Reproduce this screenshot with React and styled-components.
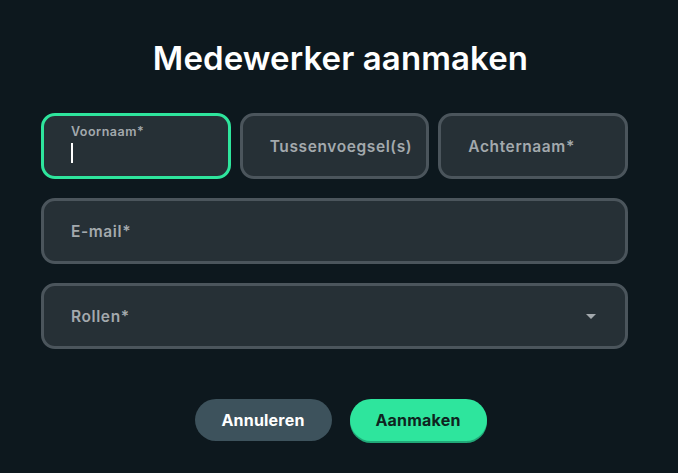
import React from "react";
import styled, { createGlobalStyle } from "styled-components";

const colors = {
  page: "#0d181e",
  field: "#263036",
  border: "#4b555c",
  focus: "#2ee59d",
  placeholder: "#a3a9ad",
  secondary: "#3d525c",
  white: "#ffffff",
};

const GlobalStyle = createGlobalStyle`
  html, body {
    margin: 0;
    padding: 0;
    background: ${colors.page};
    font-family: Inter, "Noto Sans", sans-serif;
  }
`;

const Page = styled.div`
  width: 678px;
  height: 473px;
  box-sizing: border-box;
  padding: 38px 50px 0 41px;
  display: flex;
  flex-direction: column;
  background: ${colors.page};
`;

const Title = styled.h1`
  margin: 0 0 35px 0;
  text-align: center;
  color: ${colors.white};
  font-size: 33px;
  font-weight: 600;
  letter-spacing: 0.1px;
  line-height: 40px;
  padding-left: 12px;
`;

const Form = styled.div`
  display: flex;
  flex-direction: column;
  gap: 19px;
`;

const Row = styled.div`
  display: grid;
  grid-template-columns: repeat(${(p) => p.cols || 1}, minmax(0, 1fr));
  gap: 9px;
`;

const Field = styled.div`
  position: relative;
  height: 66px;
  box-sizing: border-box;
  border: 3px solid ${(p) => (p.focused ? colors.focus : colors.border)};
  border-radius: 14px;
  background: ${colors.field};
  padding: 0 27px;
  display: flex;
  flex-direction: column;
  justify-content: center;
`;

const Placeholder = styled.span`
  color: ${colors.placeholder};
  font-size: 15.5px;
  font-weight: 600;
  letter-spacing: 0.6px;
  white-space: nowrap;
`;

const SmallLabel = styled.span`
  color: ${colors.placeholder};
  font-size: 12.5px;
  font-weight: 600;
  letter-spacing: 0.5px;
  margin-top: -6px;
`;

const Caret = styled.span`
  display: block;
  width: 1.5px;
  height: 20px;
  background: ${colors.white};
  margin-top: 4px;
`;

const Arrow = styled.span`
  position: absolute;
  right: 29px;
  top: 50%;
  margin-top: -2px;
  width: 0;
  height: 0;
  border-left: 5px solid transparent;
  border-right: 5px solid transparent;
  border-top: 5px solid ${colors.placeholder};
`;

const Actions = styled.div`
  display: flex;
  justify-content: center;
  gap: 18px;
  margin-top: 50px;
  padding-left: 12px;
`;

const Button = styled.button`
  width: 137px;
  height: 42px;
  border: none;
  border-radius: 21px;
  font-family: inherit;
  font-size: 16px;
  font-weight: 700;
  letter-spacing: 0.2px;
  cursor: pointer;
  background: ${(p) => (p.primary ? colors.focus : colors.secondary)};
  color: ${(p) => (p.primary ? "#0f2420" : colors.white)};
  box-shadow: ${(p) => (p.primary ? "0 2px 0 #22a878" : "none")};
`;

const App = () => {
  return (
    <>
      <GlobalStyle />
      <Page>
        <Title>Medewerker aanmaken</Title>
        <Form>
          <Row cols={3}>
            <Field focused>
              <SmallLabel>Voornaam*</SmallLabel>
              <Caret />
            </Field>
            <Field>
              <Placeholder>Tussenvoegsel(s)</Placeholder>
            </Field>
            <Field>
              <Placeholder>Achternaam*</Placeholder>
            </Field>
          </Row>
          <Row>
            <Field>
              <Placeholder>E-mail*</Placeholder>
            </Field>
          </Row>
          <Row>
            <Field>
              <Placeholder>Rollen*</Placeholder>
              <Arrow />
            </Field>
          </Row>
        </Form>
        <Actions>
          <Button>Annuleren</Button>
          <Button primary>Aanmaken</Button>
        </Actions>
      </Page>
    </>
  );
};

export default App;
